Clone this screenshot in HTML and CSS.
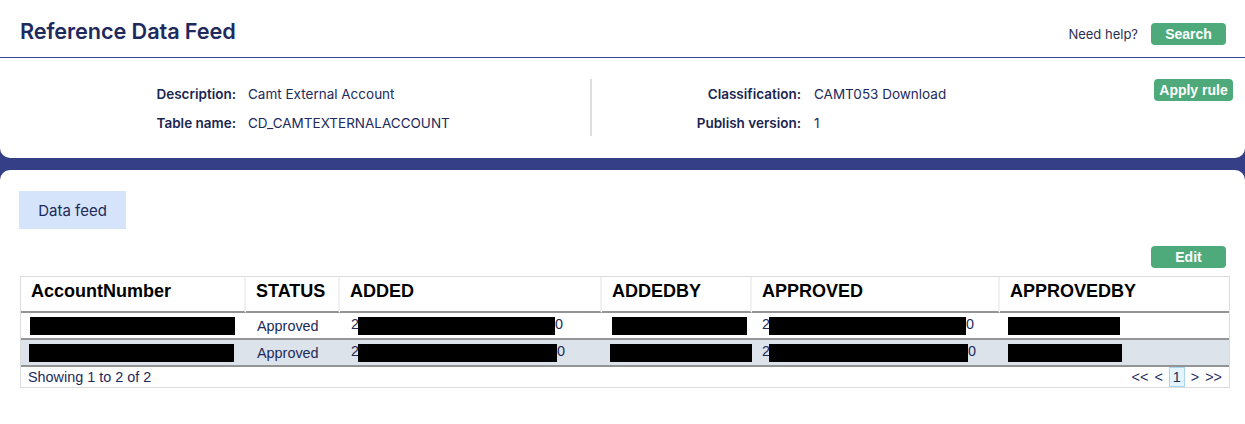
FILE: index.html
```html
<!DOCTYPE html>
<html lang="en">
<head>
<meta charset="utf-8">
<title>Reference Data Feed</title>
<link rel="stylesheet" href="styles.css">
</head>
<body>
<div class="top-card">
  <header class="page-header">
    <h1 class="title">Reference Data Feed</h1>
    <div class="header-actions">
      <span class="help">Need help?</span>
      <button class="btn btn-search">Search</button>
    </div>
  </header>
  <section class="info">
    <div class="info-block info-left">
      <div class="label">Description:</div><div class="value">Camt External Account</div>
      <div class="label">Table name:</div><div class="value">CD_CAMTEXTERNALACCOUNT</div>
    </div>
    <div class="divider"></div>
    <div class="info-block info-right">
      <div class="label">Classification:</div><div class="value">CAMT053 Download</div>
      <div class="label">Publish version:</div><div class="value">1</div>
    </div>
    <button class="btn btn-apply">Apply rule</button>
  </section>
</div>
<main class="content-card">
  <div class="tabs"><div class="tab">Data feed</div></div>
  <div class="toolbar"><button class="btn btn-edit">Edit</button></div>
  <table class="grid">
    <colgroup>
      <col class="c1"><col class="c2"><col class="c3"><col class="c4"><col class="c5"><col class="c6">
    </colgroup>
    <thead>
      <tr>
        <th>AccountNumber</th><th>STATUS</th><th>ADDED</th><th>ADDEDBY</th><th>APPROVED</th><th class="last">APPROVEDBY</th>
      </tr>
    </thead>
    <tbody>
      <tr>
        <td class="first"><span class="redact r-acct1"></span></td>
        <td>Approved</td>
        <td>2<span class="redact r-date1"></span>0</td>
        <td class="shift"><span class="redact r-by1"></span></td>
        <td class="shift">2<span class="redact r-date1"></span>0</td>
        <td class="shift2"><span class="redact r-appby1"></span></td>
      </tr>
      <tr class="alt">
        <td class="first2"><span class="redact r-acct2"></span></td>
        <td>Approved</td>
        <td>2<span class="redact r-date2"></span>0</td>
        <td class="shift2"><span class="redact r-by2"></span></td>
        <td class="shift">2<span class="redact r-date2"></span>0</td>
        <td class="shift2"><span class="redact r-appby2"></span></td>
      </tr>
      <tr class="foot">
        <td colspan="6">
          <div class="foot-row">
            <span>Showing 1 to 2 of 2</span>
            <span class="pager"><span>&lt;&lt;</span><span>&lt;</span><span class="page-cur">1</span><span>&gt;</span><span>&gt;&gt;</span></span>
          </div>
        </td>
      </tr>
    </tbody>
  </table>
</main>
</body>
</html>
```
FILE: styles.css
```css
html, body {
  margin: 0;
  padding: 0;
}
body {
  background: #353f87;
  min-height: 100vh;
  display: flex;
  flex-direction: column;
  font-family: "Inter", "Liberation Sans", sans-serif;
  color: #1c2a5c;
}
.top-card {
  background: #fff;
  border-radius: 0 0 10px 10px;
}
.page-header {
  height: 57px;
  border-bottom: 1px solid #3a4696;
  display: flex;
  align-items: center;
  justify-content: space-between;
  padding: 0 19px 0 20px;
}
.title {
  margin: 0;
  font-size: 21.7px;
  font-weight: 600;
  color: #1e2a5e;
  letter-spacing: -0.1px;
  padding-top: 4px;
}
.header-actions {
  display: flex;
  align-items: center;
  gap: 13px;
  padding-top: 11px;
}
.help {
  font-size: 13px;
  color: #2a3050;
}
.btn {
  border: 0;
  border-radius: 4px;
  background: #4eaa7b;
  color: #fff;
  font-family: "Liberation Sans", Arial, sans-serif;
  font-weight: 700;
  font-size: 14px;
  height: 22px;
  padding: 0;
  line-height: 22px;
}
.btn-search { width: 75px; }
.btn-apply { width: 79px; align-self: flex-start; }
.btn-edit { width: 75px; }

.info {
  height: 58px;
  padding: 21px 12px 21px 0;
  display: flex;
}
.info-block {
  display: grid;
  grid-auto-rows: 29px;
  align-items: center;
  font-size: 13.5px;
}
.info-left {
  width: 590px;
  grid-template-columns: 236px auto;
  column-gap: 12px;
}
.info-right {
  flex: 1;
  grid-template-columns: 209px auto;
  column-gap: 13px;
  align-content: start;
}
.label {
  text-align: right;
  font-weight: 600;
  color: #1a2550;
}
.value {
  color: #1c2a5c;
}
.divider {
  width: 2px;
  background: #dedede;
  height: 57px;
}

.content-card {
  flex: 1;
  margin-top: 12px;
  background: #fff;
  border-radius: 10px 10px 0 0;
  padding: 21px 16px 0 19px;
}
.tabs {
  display: flex;
}
.tab {
  width: 107px;
  height: 38px;
  background: #d5e4fb;
  display: flex;
  align-items: center;
  justify-content: center;
  font-size: 15px;
  color: #1c2a5c;
}
.toolbar {
  display: flex;
  justify-content: flex-end;
  padding-right: 3px;
  margin-top: 17px;
}
.grid {
  margin-top: 8px;
  margin-left: 1px;
  width: 1210px;
  border-collapse: separate;
  border-spacing: 0;
  border: 1px solid #dcdcdc;
  table-layout: fixed;
  font-family: "Liberation Sans", Arial, sans-serif;
}
.c1 { width: 225px; }
.c2 { width: 94px; }
.c3 { width: 262px; }
.c4 { width: 150px; }
.c5 { width: 248px; }
.c6 { width: auto; }
.grid th {
  height: 29px;
  text-align: left;
  font-size: 18px;
  font-weight: 700;
  color: #000;
  padding: 0 0 5px 10px;
  border-right: 2px solid #f1f1f1;
  border-bottom: 2px solid #949494;
  vertical-align: middle;
}
.grid th.last { border-right: 0; }
.grid td {
  height: 25px;
  padding: 0 0 0 11px;
  font-size: 14.4px;
  color: #1c2a5c;
  border-bottom: 2px solid #949494;
  vertical-align: middle;
  white-space: nowrap;
  overflow: hidden;
}
.grid td.first { padding-left: 9px; }
.grid td.first2 { padding-left: 8px; }
.grid td.shift { padding-left: 10px; }
.grid td.shift2 { padding-left: 8px; }
.grid tr.alt td { background: #dce3eb; }
.grid tr.foot td {
  height: 20px;
  border-bottom: 0;
  padding: 0 7px 0 7px;
}
.foot-row {
  display: flex;
  justify-content: space-between;
  align-items: center;
}
.pager {
  display: flex;
  align-items: center;
  gap: 6px;
}
.page-cur {
  width: 14px;
  height: 18px;
  border: 1px solid #a9d6ef;
  background: #e4f4fc;
  text-align: center;
  line-height: 18px;
}
.redact {
  display: inline-block;
  background: #000;
  height: 18px;
  vertical-align: middle;
}
.r-acct1 { width: 205px; }
.r-acct2 { width: 205px; }
.r-date1 { width: 197px; margin-left: -1px; }
.r-date2 { width: 199px; margin-left: -1px; }
.r-by1 { width: 135px; }
.r-by2 { width: 147px; }
.r-appby1 { width: 112px; }
.r-appby2 { width: 114px; }
```
